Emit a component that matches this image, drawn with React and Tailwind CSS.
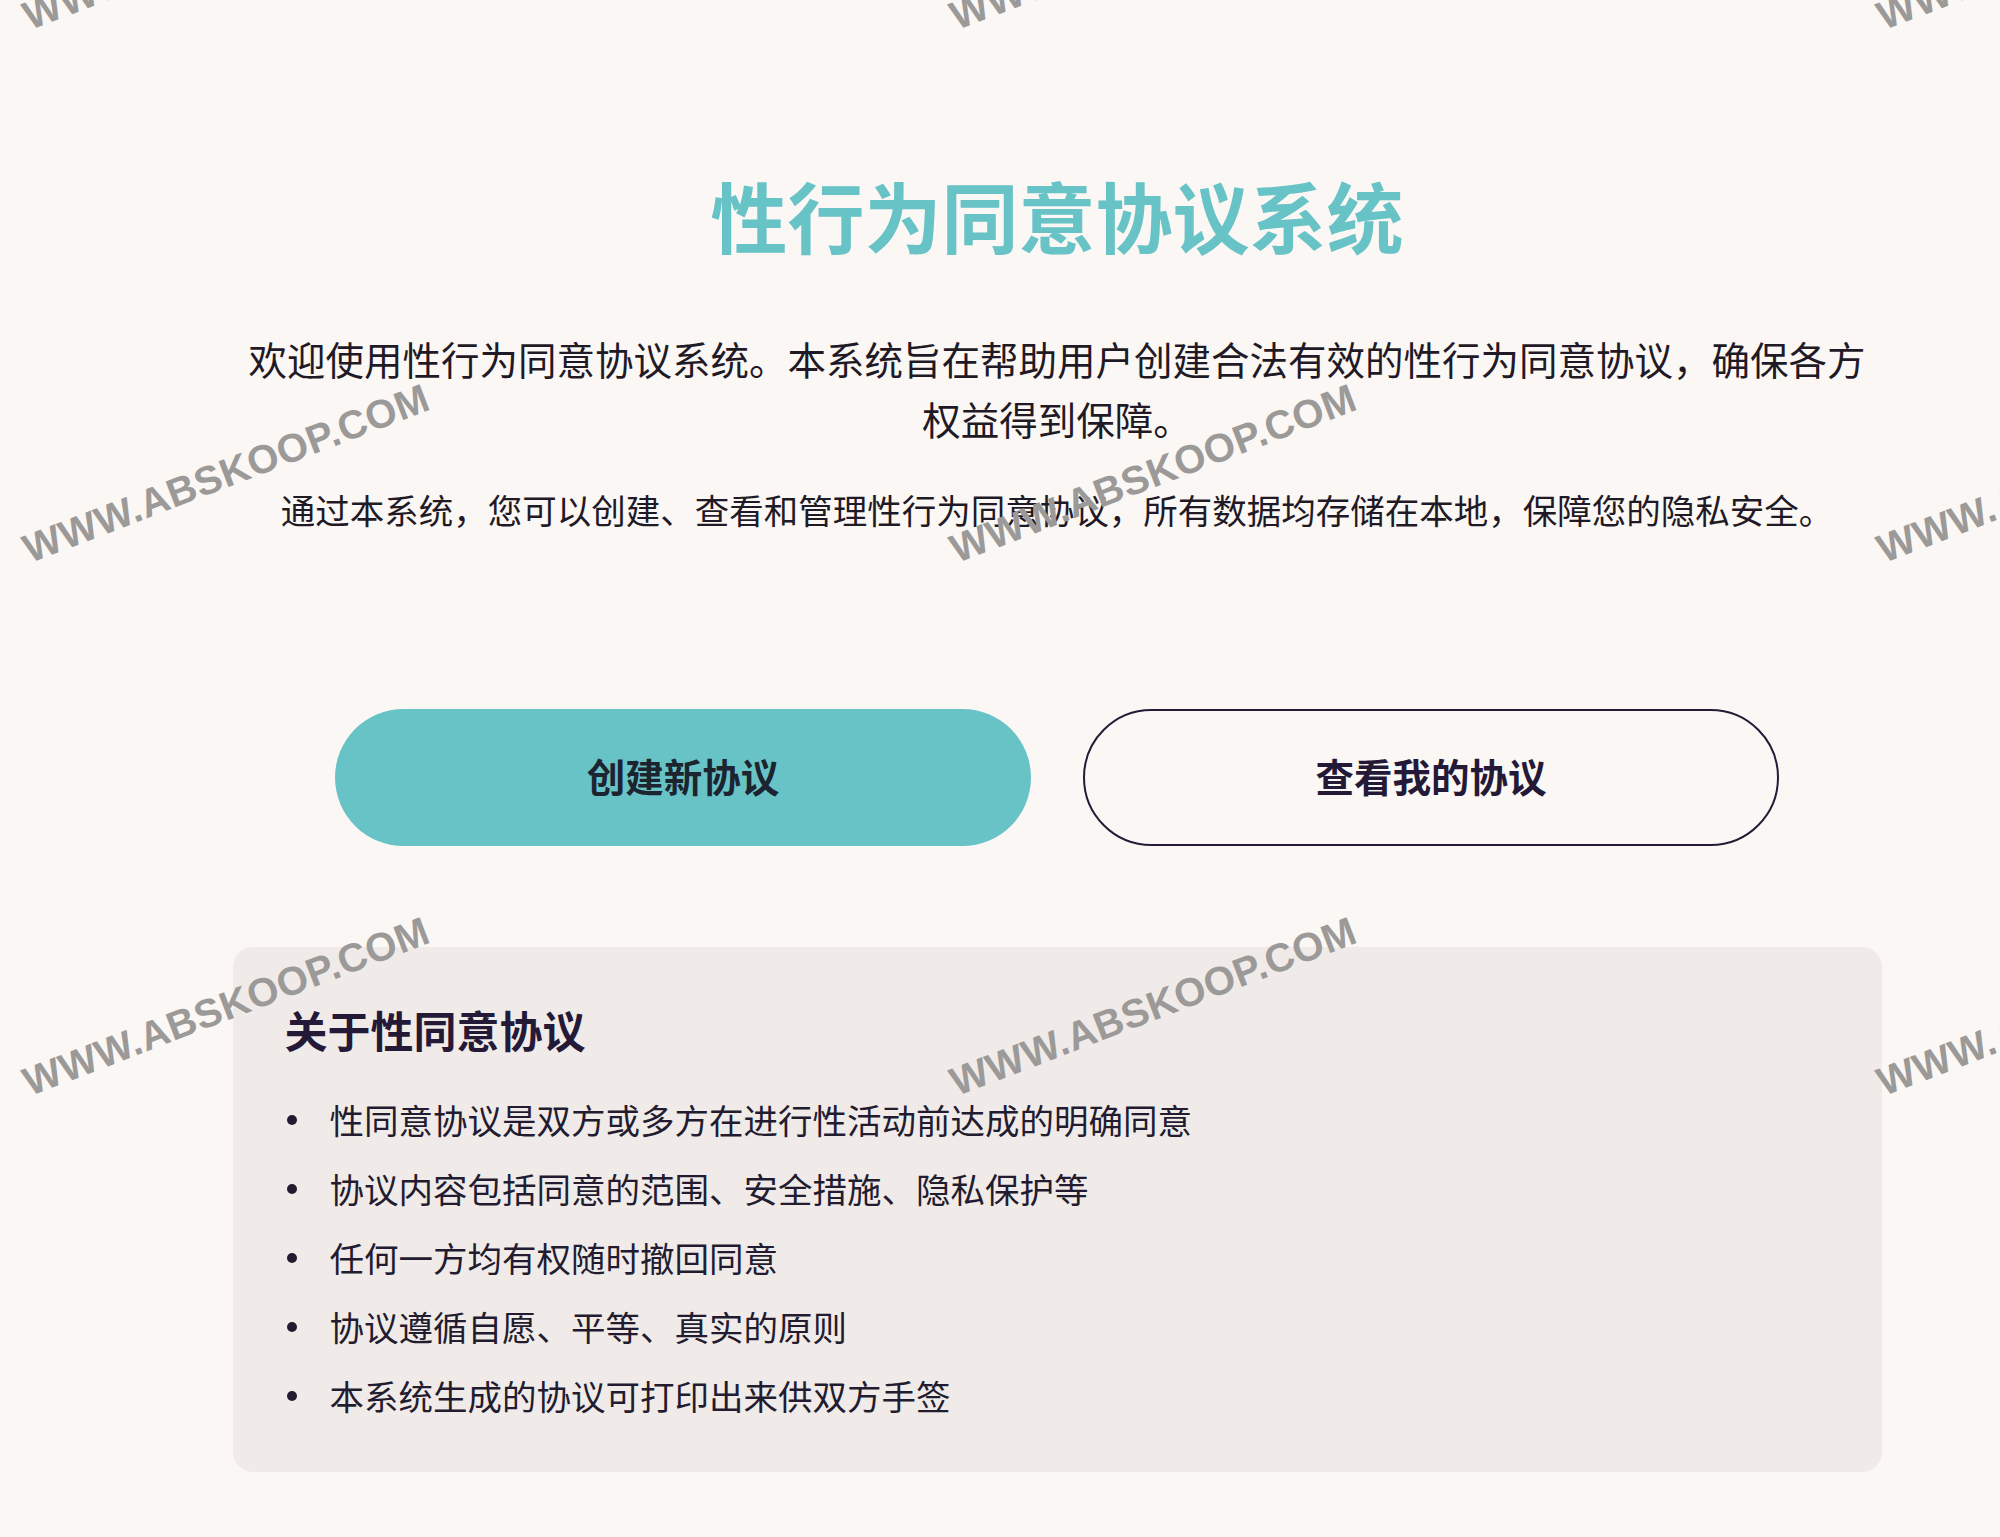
import React from "react";

const cjk = { fontFamily: '"Noto Sans CJK SC", "Noto Sans", sans-serif' };

const points = [
  "性同意协议是双方或多方在进行性活动前达成的明确同意",
  "协议内容包括同意的范围、安全措施、隐私保护等",
  "任何一方均有权随时撤回同意",
  "协议遵循自愿、平等、真实的原则",
  "本系统生成的协议可打印出来供双方手签",
];

// watermark stamps laid over the page
const marks = [
  "left-[226px] top-[-60px]",
  "left-[1153px] top-[-60px]",
  "left-[2080px] top-[-60px]",
  "left-[226px] top-[473px]",
  "left-[1153px] top-[473px]",
  "left-[2080px] top-[473px]",
  "left-[226px] top-[1006px]",
  "left-[1153px] top-[1006px]",
  "left-[2080px] top-[1006px]",
];

const App = () => {
  return (
    <div className="relative min-h-[1537px] overflow-hidden bg-[#fbf7f4] text-[#1f1a26]" style={cjk}>
      <div className="flex justify-center pl-[114px]">
        <main className="w-[1649px] pt-[169px]">
          {/* header */}
          <h1 className="text-center text-[77px] leading-[92px] font-bold text-[#68c3c6]">
            性行为同意协议系统
          </h1>

          <p className="mt-[67px] text-center text-[38.5px] leading-[60px]">
            欢迎使用性行为同意协议系统。本系统旨在帮助用户创建合法有效的性行为同意协议，确保各方权益得到保障。
          </p>
          <p className="mt-[34px] text-center text-[34.5px] leading-[55px]">
            通过本系统，您可以创建、查看和管理性行为同意协议，所有数据均存储在本地，保障您的隐私安全。
          </p>

          {/* actions */}
          <div className="mt-[172px] flex justify-center gap-[52px]">
            <button className="w-[696px] h-[137px] rounded-full bg-[#68c3c6] pb-[4px] text-[38.5px] font-bold text-[#1c2430]">
              创建新协议
            </button>
            <button className="w-[696px] h-[137px] rounded-full border-2 border-[#241a38] pb-[4px] text-[38.5px] font-bold text-[#241a38]">
              查看我的协议
            </button>
          </div>

          {/* about */}
          <section className="mt-[101px] rounded-[20px] bg-[#f0ebe8] px-[52px] pt-[52px] pb-[49px]">
            <h2 className="text-[43px] leading-[60px] font-bold text-[#241a38]">关于性同意协议</h2>
            <ul className="mt-[33px] flex flex-col gap-[14px] text-[34.5px] leading-[55px] text-[#231c30]">
              {points.map((p) => (
                <li key={p} className="flex items-center">
                  <span className="ml-[2px] mr-[33px] h-[10px] w-[10px] shrink-0 rounded-full bg-[#231c30]" />
                  {p}
                </li>
              ))}
            </ul>
          </section>
        </main>
      </div>

      <div className="pointer-events-none absolute inset-0">
        {marks.map((pos) => (
          <span
            key={pos}
            className={`absolute ${pos} -translate-x-1/2 -translate-y-1/2 -rotate-[21deg] whitespace-nowrap font-bold text-[40px] tracking-[0.5px] text-[#9c9a98]`}
            style={{ fontFamily: '"Liberation Sans", Arial, sans-serif' }}
          >
            WWW.ABSKOOP.COM
          </span>
        ))}
      </div>
    </div>
  );
};

export default App;
